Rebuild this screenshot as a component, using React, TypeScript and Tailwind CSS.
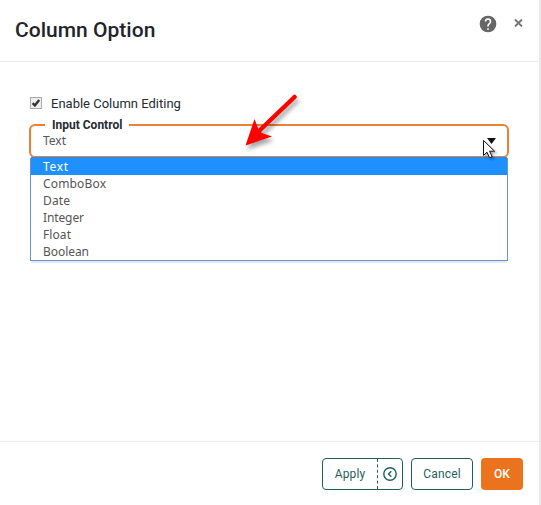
const options: { name: string; width: number }[] = [
  { name: "Text", width: 25 },
  { name: "ComboBox", width: 63 },
  { name: "Date", width: 27 },
  { name: "Integer", width: 41 },
  { name: "Float", width: 28 },
  { name: "Boolean", width: 46 },
];

function Label({ text, width }: { text: string; width: number }) {
  return (
    <svg width={width + 6} height="17" className="block overflow-visible" fill="currentColor">
      <text x="0" y="13" textLength={width} className="font-['Noto_Sans',sans-serif] text-[12px]">
        {text}
      </text>
    </svg>
  );
}

function Header() {
  return (
    <header className="flex h-[62px] items-start justify-between border-b border-[#ebebeb] pl-[15px] pr-4">
      <h1 className="mt-[15px] text-[21px] leading-[30px] font-medium tracking-[0.02px] text-[#1e252b]">Column Option</h1>
      <div className="flex items-start">
        <svg className="mt-[14px]" width="20" height="20" viewBox="0 0 24 24" fill="#666">
          <path d="M12 2a10 10 0 1 0 0 20 10 10 0 0 0 0-20zm1 17h-2v-2h2v2zm2.070-7.750-.9.920C13.450 12.900 13 13.500 13 15h-2v-.5c0-1.100.450-2.100 1.170-2.830l1.240-1.260c.37-.36.59-.86.59-1.410a2 2 0 1 0-4 0H8a4 4 0 1 1 8 0c0 .88-.36 1.680-.93 2.250z" />
        </svg>
        <svg className="ml-[16px] mt-[18px]" width="9" height="9" viewBox="0 0 9 9" fill="none" stroke="#777" strokeWidth="1.900">
          <path d="M1 1.500 8 8.500M8 1.500 1 8.500" />
        </svg>
      </div>
    </header>
  );
}

export default function App() {
  return (
    <div className="relative flex h-[505px] w-[541px] flex-col overflow-hidden border-r-2 border-[#ebebeb] bg-white font-['Roboto',sans-serif]">
      <Header />
      <main className="flex-1 px-[29px] pt-[33px]">
        <label className="flex h-4 items-center gap-[9px] pl-px text-[13px] text-[#252b30]">
          <span className="flex size-3 items-center justify-center border border-[#aaa] bg-[#eee]">
            <svg width="10" height="10" viewBox="0 0 11 11" fill="none" stroke="#333" strokeWidth="2.600">
              <path d="M1.800 5.600 4.300 8.200 9 2.200" />
            </svg>
          </span>
          <span className="pt-px">Enable Column Editing</span>
        </label>
        <div className="relative mt-[13px] h-[34px] w-[480px] rounded-[6px] border-2 border-[#ee8036] text-[#555]">
          <span className="absolute left-[14px] top-[-9px] bg-white px-[7px] text-[12px] leading-4 font-bold text-[#252b30]">Input Control</span>
          <div className="flex h-full items-center justify-between pb-px pl-[12px] pr-[11px]">
            <Label text="Text" width={23} />
            <svg width="9" height="6" viewBox="0 0 9 6" fill="#111"><path d="M0 0h9L4.500 6z" /></svg>
          </div>
          <ul className="absolute left-[-1px] top-[32px] h-[103px] w-[478px] border border-t-0 border-[#6b91cf] bg-white shadow-[0_3px_0_-1px_#e5eae9]">
            {options.map((o, i) => (
              <li key={o.name} className={i === 0 ? "-mt-px h-[18px] bg-[#1e90ff] pt-px pl-3 text-white" : "h-[17px] pl-3"}>
                <Label text={o.name} width={o.width} />
              </li>
            ))}
          </ul>
        </div>
      </main>
      <footer className="flex h-[64px] items-start justify-end gap-2 border-t border-[#ebebeb] pr-4 pt-4 text-[12px] text-[#1f5f5b]">
        <div className="flex h-8 w-[81px] rounded-[4px] border border-[#1f5f5b]">
          <button className="w-[55px] border-r border-dashed border-[#1f5f5b] tracking-[0.15px]">Apply</button>
          <button className="flex flex-1 items-center justify-center pr-px" aria-label="Collapse">
            <svg width="14" height="14" viewBox="0 0 14 14" fill="none" stroke="currentColor" strokeWidth="1.400">
              <circle cx="7" cy="7" r="6.200" />
              <path d="M8.300 4.200 5.500 7l2.800 2.800" />
            </svg>
          </button>
        </div>
        <button className="h-8 w-[62px] rounded-[4px] border border-[#1f5f5b] tracking-[0.15px]">Cancel</button>
        <button className="h-8 w-[42px] rounded-[4px] bg-[#ec731d] font-medium text-white">OK</button>
      </footer>
      <svg className="absolute left-[234px] top-[85px] drop-shadow-[2px_4px_2px_rgba(0,0,0,0.35)]" width="75" height="70" viewBox="235 85 75 70">
        <path d="M295.500 97 260 131" stroke="#f00" strokeWidth="4.500" strokeLinecap="round" />
        <path d="m246.500 145.500 9-26.500 4 10.500 3.500 3.500 10 3.500z" fill="#f00" />
      </svg>
      <svg className="absolute left-[483px] top-[139px] drop-shadow-[2px_2px_1px_rgba(0,0,0,0.3)]" width="14" height="21" viewBox="0 0 14 21">
        <path d="M.5 1.500v15l3.500-3.300 2.500 5.600 2.600-1.200-2.500-5.400h5z" fill="#fff" stroke="#111" />
      </svg>
    </div>
  );
}
